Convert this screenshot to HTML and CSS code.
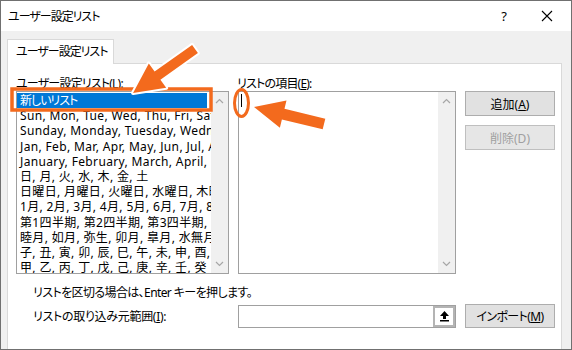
FILE: index.html
```html
<!DOCTYPE html>
<html>

<head>
    <title>ユーザー設定リスト</title>
    <link rel="stylesheet" href="styles.css">
</head>

<body>

    <div class="window">

        <!-- Title bar -->
        <div class="titlebar">
            <span class="title">ユーザー設定リスト</span>
            <span class="help">?</span>
            <svg class="close" width="12" height="12" viewBox="0 0 12 12">
                <path d="M1 1 L11 11 M11 1 L1 11" stroke="#000" stroke-width="1.1" fill="none" />
            </svg>
        </div>

        <!-- Dialog body -->
        <div class="body">
            <div class="tabs">
                <div class="tab">ユーザー設定リスト</div>
            </div>

            <div class="panel">
                <div class="lists">
                    <div class="col col-left">
                        <div class="label">ユーザー設定リスト(<u>L</u>):</div>
                        <div class="listbox">
                            <div class="items">
                                <div class="item selected">新しいリスト</div>
                                <div class="item">Sun, Mon, Tue, Wed, Thu, Fri, Sat</div>
                                <div class="item">Sunday, Monday, Tuesday, Wednesday, Thursday</div>
                                <div class="item">Jan, Feb, Mar, Apr, May, Jun, Jul, Aug</div>
                                <div class="item">January, February, March, April, May</div>
                                <div class="item">日, 月, 火, 水, 木, 金, 土</div>
                                <div class="item">日曜日, 月曜日, 火曜日, 水曜日, 木曜日</div>
                                <div class="item">1月, 2月, 3月, 4月, 5月, 6月, 7月, 8月</div>
                                <div class="item">第1四半期, 第2四半期, 第3四半期, 第4四半期</div>
                                <div class="item">睦月, 如月, 弥生, 卯月, 皐月, 水無月</div>
                                <div class="item">子, 丑, 寅, 卯, 辰, 巳, 午, 未, 申, 酉, 戌</div>
                                <div class="item">甲, 乙, 丙, 丁, 戊, 己, 庚, 辛, 壬, 癸</div>
                            </div>
                            <div class="scrollbar">
                                <svg width="9" height="6" viewBox="0 0 9 6"><path d="M1 5 L4.5 1.5 L8 5" stroke="#a6a6a6" stroke-width="1.2" fill="none" /></svg>
                                <svg width="9" height="6" viewBox="0 0 9 6"><path d="M1 1 L4.5 4.5 L8 1" stroke="#a6a6a6" stroke-width="1.2" fill="none" /></svg>
                            </div>
                        </div>
                    </div>

                    <div class="col col-mid">
                        <div class="label">リストの項目(<u>E</u>):</div>
                        <div class="listbox">
                            <div class="items">
                                <div class="caret"></div>
                            </div>
                            <div class="scrollbar">
                                <svg width="9" height="6" viewBox="0 0 9 6"><path d="M1 5 L4.5 1.5 L8 5" stroke="#a6a6a6" stroke-width="1.2" fill="none" /></svg>
                                <svg width="9" height="6" viewBox="0 0 9 6"><path d="M1 1 L4.5 4.5 L8 1" stroke="#a6a6a6" stroke-width="1.2" fill="none" /></svg>
                            </div>
                        </div>
                    </div>

                    <div class="col col-buttons">
                        <button class="btn">追加(<u>A</u>)</button>
                        <button class="btn" disabled>削除(D)</button>
                    </div>
                </div>

                <p class="hint">リストを区切る場合は、Enter キーを押します。</p>

                <div class="import-row">
                    <span class="import-label">リストの取り込み元範囲(<u>I</u>):</span>
                    <div class="range-input">
                        <span class="range-btn">
                            <svg width="11" height="12" viewBox="0 0 11 12">
                                <path d="M5.5 1 L10 6 L7 6 L7 9 L4 9 L4 6 L1 6 Z" fill="#000" />
                                <rect x="1" y="10" width="9" height="1.5" fill="#000" />
                            </svg>
                        </span>
                    </div>
                    <button class="btn btn-import">インポート(<u>M</u>)</button>
                </div>
            </div>
        </div>

        <!-- Orange annotations drawn over the dialog -->
        <svg class="annotations" width="572" height="350" viewBox="0 0 572 350">
            <rect x="12" y="89" width="199" height="21" fill="none" stroke="#f36a1d" stroke-width="3.5" />
            <ellipse cx="241.5" cy="103" rx="7" ry="13.5" fill="none" stroke="#f36a1d" stroke-width="3" />
            <polygon class="arrow" transform="translate(195 49) rotate(144.6)"
                points="0,-5 46,-5 46,-15 76,0 46,15 46,5 0,5" />
            <polygon class="arrow" transform="translate(324 124) rotate(-166.35)"
                points="0,-5.5 42,-5.5 42,-14 72,0 42,14 42,5.5 0,5.5" />
        </svg>
    </div>

</body>

</html>
```

FILE: styles.css
```css
body {
    margin: 0;
    background-color: #f0f0f0;
    font-family: "Noto Sans", "Noto Sans CJK JP", sans-serif;
    font-size: 12px;
    font-feature-settings: "palt";
    color: #000;
}

.window {
    position: relative;
    width: 572px;
    height: 350px;
    box-sizing: border-box;
    border: 1px solid #707070;
    background-color: #f0f0f0;
    display: flex;
    flex-direction: column;
    overflow: hidden;
}

/* Title bar */
.titlebar {
    height: 30px;
    background-color: #fff;
    display: flex;
    align-items: center;
    padding-left: 7px;
    flex-shrink: 0;
}

.title {
    flex: 1;
    letter-spacing: -1px;
}

.help {
    margin-right: 34px;
    font-size: 13px;
}

.close {
    margin-right: 18px;
}

/* Tabs and panel */
.body {
    flex: 1;
    display: flex;
    flex-direction: column;
    padding: 8px 9px 0 6px;
}

.tabs {
    display: flex;
    position: relative;
    z-index: 1;
}

.tab {
    width: 107px;
    height: 25px;
    box-sizing: border-box;
    background-color: #fff;
    border: 1px solid #d9d9d9;
    border-bottom: none;
    padding: 4px 0 0 8px;
    line-height: 16px;
    white-space: nowrap;
    letter-spacing: -1px;
}

.panel {
    flex: 1;
    margin-top: -1px;
    background-color: #fff;
    border: 1px solid #d9d9d9;
    border-bottom: none;
    padding: 12px 0 0 8px;
}

.lists {
    display: flex;
    gap: 9px;
}

.label {
    height: 15px;
    line-height: 15px;
    white-space: nowrap;
    letter-spacing: -0.8px;
}

.col-left {
    width: 213px;
}

.col-mid {
    width: 218px;
}

.col-mid .label {
    margin-left: -1px;
}

.listbox {
    height: 183px;
    box-sizing: border-box;
    border: 1px solid #a0a0a0;
    display: flex;
}

.items {
    flex: 1;
    overflow: hidden;
    padding: 0;
}

.item {
    height: 15.2px;
    line-height: 15.2px;
    padding-left: 3px;
    white-space: nowrap;
    overflow: hidden;
    letter-spacing: 0.35px;
}

.item.selected {
    background-color: #0078d7;
    color: #fff;
    margin: 1px 4px 0 0;
    letter-spacing: -1px;
}

.caret {
    width: 1px;
    height: 13px;
    margin: 2px 0 0 2px;
    background-color: #000;
}

.scrollbar {
    width: 17px;
    background-color: #f0f0f0;
    display: flex;
    flex-direction: column;
    align-items: center;
    justify-content: space-between;
    padding: 6px 0 6px;
}

/* Buttons */
.col-buttons {
    width: 90px;
    padding-top: 15px;
    display: flex;
    flex-direction: column;
    gap: 9px;
}

.btn {
    width: 90px;
    height: 25px;
    box-sizing: border-box;
    background-color: #e1e1e1;
    border: 1px solid #adadad;
    font-family: inherit;
    font-size: 12px;
    font-feature-settings: "palt";
    color: #000;
    padding: 0;
}

.btn:disabled {
    background-color: #e6e6e6;
    border-color: #bfbfbf;
    color: #a0a0a0;
}

/* Bottom rows */
.hint {
    margin: 11px 0 0 17px;
    line-height: 15px;
    letter-spacing: -0.6px;
}

.import-row {
    display: flex;
    align-items: center;
    margin-top: 4px;
}

.import-label {
    width: 205px;
    margin-left: 17px;
    letter-spacing: -0.3px;
}

.range-input {
    width: 218px;
    height: 23px;
    box-sizing: border-box;
    border: 1px solid #a0a0a0;
    display: flex;
    justify-content: flex-end;
    margin-right: 9px;
}

.range-btn {
    width: 22px;
    height: 21px;
    box-sizing: border-box;
    border: 2px solid #b4b4b4;
    background-color: #fff;
    display: flex;
    align-items: center;
    justify-content: center;
}

.btn-import {
    height: 24px;
    letter-spacing: -0.6px;
}

/* Annotations */
.annotations {
    position: absolute;
    left: -1px;
    top: -1px;
    pointer-events: none;
}

.arrow {
    fill: #f36a1d;
    stroke: #fff;
    stroke-width: 4;
    stroke-linejoin: round;
    paint-order: stroke;
}
```
